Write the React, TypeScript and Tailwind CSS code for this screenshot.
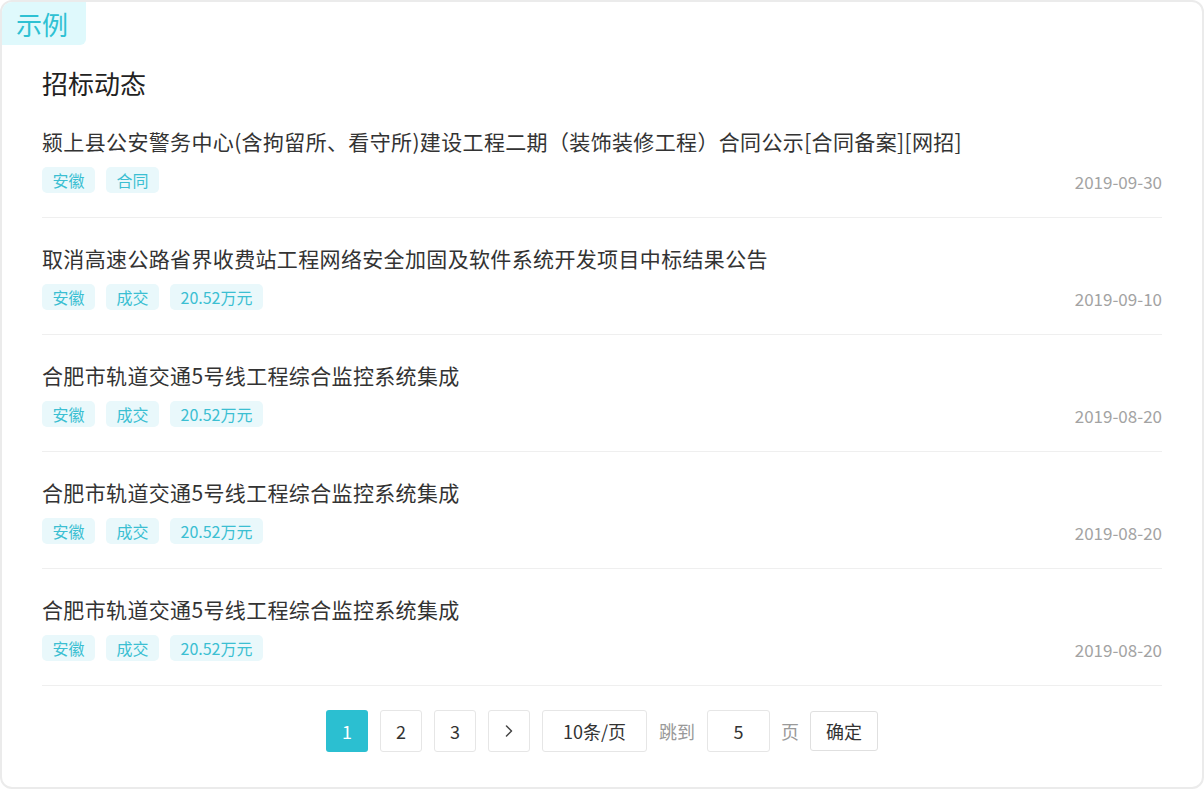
import React from 'react';

type Notice = {
  title: string;
  tags: string[];
  date: string;
};

const notices: Notice[] = [
  {
    title: '颍上县公安警务中心(含拘留所、看守所)建设工程二期（装饰装修工程）合同公示[合同备案][网招]',
    tags: ['安徽', '合同'],
    date: '2019-09-30',
  },
  {
    title: '取消高速公路省界收费站工程网络安全加固及软件系统开发项目中标结果公告',
    tags: ['安徽', '成交', '20.52万元'],
    date: '2019-09-10',
  },
  {
    title: '合肥市轨道交通5号线工程综合监控系统集成',
    tags: ['安徽', '成交', '20.52万元'],
    date: '2019-08-20',
  },
  {
    title: '合肥市轨道交通5号线工程综合监控系统集成',
    tags: ['安徽', '成交', '20.52万元'],
    date: '2019-08-20',
  },
  {
    title: '合肥市轨道交通5号线工程综合监控系统集成',
    tags: ['安徽', '成交', '20.52万元'],
    date: '2019-08-20',
  },
];

const font = "font-['Noto_Sans_CJK_SC','Noto_Sans',sans-serif]";

function Tag({ label }: { label: string }) {
  return (
    <span className="flex h-[26px] items-center rounded-[5px] bg-[#e9f8fb] px-[10.5px] text-[16px] leading-none text-[#3bbfd2]">
      {label}
    </span>
  );
}

function NoticeRow({ notice }: { notice: Notice }) {
  return (
    <div className="border-b border-[#efefef] pt-[27px] pb-6">
      <p className="h-[26px] text-[21px] leading-[26px] tracking-[0.35px] text-[#333] whitespace-nowrap">{notice.title}</p>
      <div className="mt-[13px] flex items-end justify-between">
        <div className="flex gap-[11px]">
          {notice.tags.map((t, i) => (
            <Tag key={i} label={t} />
          ))}
        </div>
        <span className="text-[17px] leading-[22px] text-[#a3a3a3]">{notice.date}</span>
      </div>
    </div>
  );
}

function Pager() {
  const box = 'flex h-[42px] items-center justify-center rounded-[3px] border border-[#e6e6e6] bg-white text-[18px] text-[#333]';
  return (
    <div className="mt-[24px] flex items-center justify-center gap-3">
      <button className="flex h-[42px] w-[42px] items-center justify-center rounded-[3px] bg-[#2bbfd1] text-[18px] text-white">
        1
      </button>
      <button className={`${box} w-[42px]`}>2</button>
      <button className={`${box} w-[42px]`}>3</button>
      <button className={`${box} w-[42px]`}>
        <svg width="14" height="14" viewBox="0 0 14 14" fill="none">
          <path d="M4.5 2l5 5-5 5" stroke="#444" strokeWidth="1.5" strokeLinecap="round" strokeLinejoin="round" />
        </svg>
      </button>
      <button className={`${box} w-[105px]`}>10条/页</button>
      <span className="text-[18px] text-[#999]">跳到</span>
      <div className={`${box} w-[63px]`}>5</div>
      <span className="-mx-px text-[18px] text-[#999]">页</span>
      <button className="flex h-[40px] w-[68px] items-center justify-center rounded-[3px] border border-[#e0e0e0] bg-white text-[18px] text-[#333]">
        确定
      </button>
    </div>
  );
}

export default function App() {
  return (
    <div className={`${font} relative h-[789px] w-[1204px] overflow-hidden rounded-[12px] border-2 border-[#ebebeb] bg-white px-10`}>
      <div className="absolute left-0 top-0 flex h-[43px] w-[84px] items-center justify-center rounded-br-[6px] bg-[#dff9fc] pr-1 text-[26px] leading-none text-[#2ec1d3]">
        示例
      </div>
      <h2 className="mt-[63px] text-[26px] leading-[36px] text-[#222]">招标动态</h2>
      {notices.map((n, i) => (
        <NoticeRow key={i} notice={n} />
      ))}
      <Pager />
    </div>
  );
}
